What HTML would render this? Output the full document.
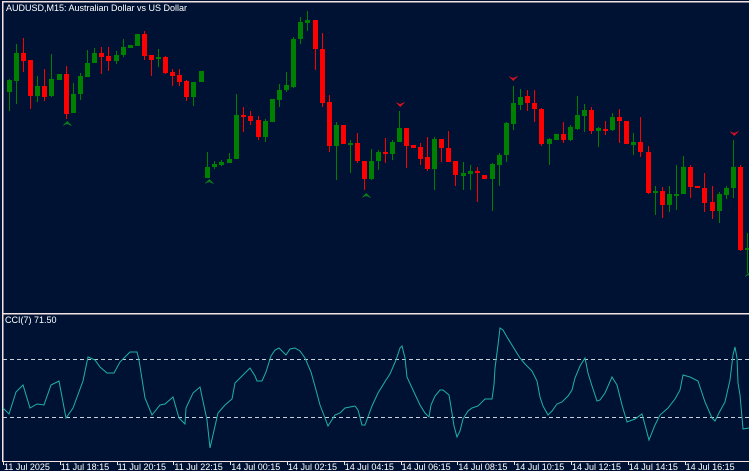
<!DOCTYPE html>
<html><head><meta charset="utf-8"><style>
html,body{margin:0;padding:0;background:#001233;width:749px;height:471px;overflow:hidden}
svg{display:block}
text{font-family:"Liberation Sans",sans-serif;font-size:9px;fill:#fff}
</style></head><body>
<svg id="s" width="749" height="471" xmlns="http://www.w3.org/2000/svg" shape-rendering="crispEdges">
<rect width="749" height="471" fill="#001233"/>
<rect x="2" y="1" width="747" height="1.5" fill="#f2e4e4"/>
<rect x="2" y="1" width="1.5" height="461" fill="#f2e4e4"/>
<rect x="2" y="313" width="747" height="1.5" fill="#f2e4e4"/>
<rect x="2" y="461" width="747" height="1" fill="#f2e4e4"/>
<line x1="3" y1="359.5" x2="749" y2="359.5" stroke="#c8d0d8" stroke-dasharray="4,3"/>
<line x1="3" y1="417.5" x2="749" y2="417.5" stroke="#c8d0d8" stroke-dasharray="4,3"/>
<text x="6" y="11">AUDUSD,M15:  Australian Dollar vs US Dollar</text>
<text x="5" y="323">CCI(7)  71.50</text>
<g id="c"></g>
<polyline id="cci" fill="none" stroke="#20b0a8" stroke-width="1" shape-rendering="auto"/>
<g id="ax"></g>
</svg>
<script>
var d=[[9,80,92,79,111,1],[16,53,81,44,104,1],[23,53,61,38,72,0],[30,60,96,60,109,0],[37,86,96,76,102,1],[44,86,97,69,101,0],[51,79,96,54,97,1],[59,74,80,74,80,1],[66,74,114,66,119,0],[73,94,113,83,113,1],[80,76,94,73,100,1],[87,63,77,50,77,1],[94,53,63,48,63,1],[101,53,57,47,74,0],[108,56,61,47,71,0],[116,55,61,51,64,1],[123,47,55,39,57,1],[130,45,48,45,48,1],[137,34,46,34,46,1],[144,34,56,31,60,0],[151,55,60,55,76,0],[158,57,58,49,67,1],[165,57,73,56,74,0],[172,72,76,69,86,0],[179,75,82,69,86,0],[186,81,97,80,101,0],[193,82,97,82,106,1],[201,71,82,71,82,1],
[207,167,178,152,178,1],[214,164,167,161,169,1],[221,162,165,160,166,1],[229,159,163,153,163,1],[236,115,159,94,159,1],[243,115,117,107,132,0],[250,116,121,111,125,0],[258,120,137,116,140,0],[265,121,137,119,142,1],[272,99,122,99,122,1],[279,90,100,84,107,1],[286,85,90,72,92,1],[293,39,87,37,88,1],[300,22,39,17,44,1],[307,20,23,11,31,1],[315,20,49,20,70,0],[322,49,103,33,107,0],[329,102,146,95,152,0],[336,125,146,122,180,1],[343,125,144,125,144,0],[350,143,144,140,173,1],[357,143,161,133,163,0],[364,161,179,161,190,0],[371,161,179,149,180,1],[378,152,161,150,170,1],[385,152,154,138,163,0],[392,142,154,140,160,1],[399,128,142,111,142,1],[406,128,146,128,168,0],[413,145,148,145,148,0],[420,147,159,143,165,0],[427,157,169,137,171,0],[434,139,169,137,190,1],[441,139,148,139,162,0],[448,148,162,131,162,0],[455,161,175,161,186,0],[463,173,176,162,190,1],[470,171,174,165,190,1],[477,171,173,167,202,0],[484,175,179,175,179,0],[492,164,179,163,211,1],[499,155,165,153,186,1],[506,123,155,122,162,1],[513,103,124,86,130,1],[520,97,105,89,110,1],[527,96,103,90,111,0],[534,103,109,90,122,0],[541,109,144,108,146,0],[549,139,144,138,165,1],[556,134,140,134,140,1],[563,134,140,122,143,0],[570,127,140,125,141,1],[577,115,129,96,130,1],[584,110,116,104,132,1],[591,110,131,107,134,0],[598,128,131,127,147,1],[605,129,130,121,135,0],[612,117,130,113,131,1],[619,117,121,109,143,0],[626,121,144,121,144,0],[633,142,145,133,155,1],[640,142,152,117,157,0],[648,152,193,146,194,0],[655,191,193,186,215,1],[662,191,205,187,218,0],[669,194,205,186,212,1],[676,194,195,165,210,1],[683,167,194,156,194,1],[690,167,187,165,198,0],[697,186,188,186,188,0],[704,188,203,173,212,0],[712,202,211,186,219,0],[719,194,211,192,223,1],[726,188,195,186,199,1],[733,167,188,140,198,1],[740,167,250,165,251,0],[747,248,250,233,273,1]];
var g=document.getElementById('c'),h='';
d.forEach(function(c){var col=c[5]?'#008000':'#ff0000';
h+='<rect x="'+c[0]+'" y="'+c[3]+'" width="1" height="'+(c[4]-c[3])+'" fill="'+col+'"/>';
h+='<rect x="'+(c[0]-2)+'" y="'+c[1]+'" width="5" height="'+Math.max(2,c[2]-c[1])+'" fill="'+col+'"/>';});
function up(x,y){return '<path d="M'+(x-5)+' '+y+' L'+x+' '+(y-5)+' L'+(x+5)+' '+y+' L'+x+' '+(y-2)+'Z" fill="#0a7a1a"/>';}
function dn(x,y){return '<path d="M'+(x-5)+' '+y+' L'+x+' '+(y+5)+' L'+(x+5)+' '+y+' L'+x+' '+(y+2)+'Z" fill="#d01020"/>';}
h+=up(67,126)+up(209,184)+up(366,198)+up(749,277)+dn(513,76)+dn(400,102)+dn(734,131);
g.innerHTML=h;
var p=[[3,408],[9,414],[16,392],[23,385],[30,408],[37,404],[44,405],[51,385],[59,381],[66,418],[73,408],[83,381],[88,357],[95,360],[100,367],[107,373],[114,373],[120,362],[130,352],[137,352],[139,360],[145,398],[152,415],[160,405],[165,404],[173,397],[179,418],[185,424],[186,408],[193,393],[200,387],[207,420],[210,448],[218,413],[225,405],[232,399],[235,383],[240,378],[250,368],[255,376],[257,381],[262,381],[266,372],[271,356],[275,350],[279,348],[283,352],[286,355],[290,349],[295,348],[300,351],[305,358],[311,372],[316,390],[320,405],[325,418],[328,426],[335,415],[340,413],[345,408],[350,407],[355,406],[358,410],[362,425],[365,425],[372,406],[378,393],[386,380],[390,374],[396,360],[400,348],[402,346],[405,358],[407,377],[413,390],[420,405],[425,413],[429,417],[431,405],[435,396],[440,390],[443,390],[449,395],[452,413],[454,426],[457,437],[460,431],[463,419],[468,411],[472,408],[478,406],[485,399],[492,399],[494,385],[495,368],[498,345],[500,328],[503,330],[507,337],[515,350],[520,358],[525,364],[532,371],[537,381],[540,397],[543,406],[548,415],[552,411],[557,404],[562,402],[568,396],[572,390],[575,378],[580,366],[585,358],[588,373],[592,386],[597,401],[600,400],[605,393],[612,377],[617,385],[622,405],[627,422],[635,419],[642,414],[645,425],[649,440],[655,425],[660,415],[668,408],[675,399],[680,390],[683,375],[690,377],[698,381],[705,402],[712,418],[715,421],[720,411],[725,402],[730,380],[733,355],[735,347],[737,358],[738,383],[740,395],[743,429],[749,428]];
document.getElementById('cci').setAttribute('points',p.map(function(a){return a.join(',')}).join(' '));
var L=['11 Jul 2025','11 Jul 18:15','11 Jul 20:15','11 Jul 22:15','14 Jul 00:15','14 Jul 02:15','14 Jul 04:15','14 Jul 06:15','14 Jul 08:15','14 Jul 10:15','14 Jul 12:15','14 Jul 14:15','14 Jul 16:15'],a='';
L.forEach(function(t,i){var x=3+i*56.8;a+='<rect x="'+Math.round(x)+'" y="462" width="1" height="3" fill="#f2e4e4"/><text x="'+(x+1)+'" y="470">'+t+'</text>';});
document.getElementById('ax').innerHTML=a;
</script>
</body></html>
